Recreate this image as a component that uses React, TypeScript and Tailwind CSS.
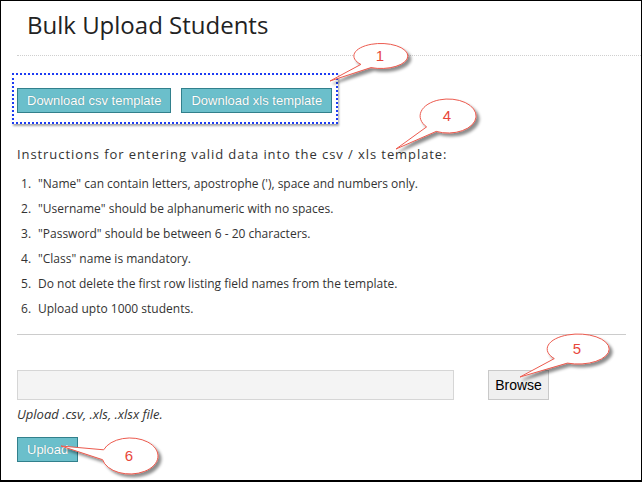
import React from 'react';

const rules = [
  '"Name" can contain letters, apostrophe (\'), space and numbers only.',
  '"Username" should be alphanumeric with no spaces.',
  '"Password" should be between 6 - 20 characters.',
  '"Class" name is mandatory.',
  'Do not delete the first row listing field names from the template.',
  'Upload upto 1000 students.',
];

type CalloutProps = {
  cx: number;
  cy: number;
  rx: number;
  ry: number;
  tip: [number, number];
  from: number;
  to: number;
  label: string;
};

// speech-bubble annotation: ellipse with a thin tail, drawn as one outline
const Callout = ({ cx, cy, rx, ry, tip, from, to, label }: CalloutProps) => {
  const pt = (deg: number) => {
    const r = (deg * Math.PI) / 180;
    return `${(cx + rx * Math.cos(r)).toFixed(1)} ${(cy + ry * Math.sin(r)).toFixed(1)}`;
  };
  const d = `M ${pt(from)} L ${tip[0]} ${tip[1]} L ${pt(to)} A ${rx} ${ry} 0 1 1 ${pt(from)} Z`;
  return (
    <g>
      <path d={d} fill="#fff" stroke="#ec5a4e" strokeWidth="1" filter="url(#bubbleShadow)" />
      <text
        x={cx - 1}
        y={cy + 5}
        textAnchor="middle"
        fontFamily="'Liberation Sans', Arial, sans-serif"
        fontSize="15"
        fill="#e8473b"
      >
        {label}
      </text>
    </g>
  );
};

const tealBtn =
  "h-[25px] px-[9px] bg-[#6bbfcb] border border-[#32808c] text-white text-[13px] leading-none font-['Liberation_Sans',Arial,sans-serif] [text-shadow:0_0_1px_rgba(0,0,0,0.3)]";

export default function App() {
  return (
    <div className="relative w-[642px] h-[482px] overflow-hidden bg-white border border-black border-b-2 font-['Open_Sans',sans-serif] text-[#333]">
      {/* Header */}
      <div className="ml-[16px] pt-[8px] pb-[14px] border-b border-dotted border-[#cfcfcf]">
        <h1 className="pl-[10px] text-[24px] leading-[32px] text-[#222]">Bulk Upload Students</h1>
      </div>

      <div className="pl-[16px] pr-[15px]">
        {/* Template downloads (annotated box) */}
        <div className="mt-[17px] -ml-[5px] w-fit border-2 border-dotted border-[#1d3cf2] pl-[3px] pr-[4px] pt-[13px] pb-[9px] shadow-[1px_2px_2px_rgba(0,0,0,0.35)]">
          <div className="flex gap-[10px]">
            <button className={tealBtn}>Download csv template</button>
            <button className={tealBtn}>Download xls template</button>
          </div>
        </div>

        {/* Instructions */}
        <h4 className="mt-[20px] text-[13px] leading-[20px] tracking-[0.92px] text-[#333]">
          Instructions for entering valid data into the csv / xls template:
        </h4>
        <ol className="mt-[7px] text-[12px] leading-[25px] text-[#333]">
          {rules.map((rule, i) => (
            <li key={i} className="flex">
              <span className="w-[21px] pl-[4px] shrink-0">{i + 1}.</span>
              <span>{rule}</span>
            </li>
          ))}
        </ol>

        <hr className="mt-[13px] border-t border-[#cccccc]" />

        {/* File picker */}
        <div className="mt-[35px] flex items-center gap-[34px]">
          <div className="w-[437px] h-[30px] bg-[#f4f4f4] border border-[#d6d6d6]" />
          <button className="h-[30px] w-[61px] bg-[#efefef] border border-[#c9c9c9] text-black text-[14px] font-['Liberation_Sans',Arial,sans-serif]">
            Browse
          </button>
        </div>
        <p className="mt-[4px] text-[13px] leading-[20px] italic text-[#333]">Upload .csv, .xls, .xlsx file.</p>

        <button className={`mt-[13px] ${tealBtn}`}>Upload</button>
      </div>

      {/* Annotation callouts */}
      <svg className="pointer-events-none absolute left-0 top-0" width="642" height="482" viewBox="0 0 642 482">
        <defs>
          <filter id="bubbleShadow" x="-20%" y="-20%" width="150%" height="160%">
            <feDropShadow dx="3" dy="3" stdDeviation="1.6" floodColor="#000" floodOpacity="0.45" />
          </filter>
        </defs>
        <Callout cx={380} cy={55} rx={27} ry={12.5} tip={[329, 80]} from={112} to={138} label="1" />
        <Callout cx={447} cy={115} rx={28} ry={17} tip={[395, 148]} from={115} to={140} label="4" />
        <Callout cx={577} cy={348} rx={31} ry={15} tip={[519, 376]} from={110} to={140} label="5" />
        <Callout cx={129} cy={455} rx={28} ry={18} tip={[60, 445]} from={168} to={200} label="6" />
      </svg>
    </div>
  );
}
